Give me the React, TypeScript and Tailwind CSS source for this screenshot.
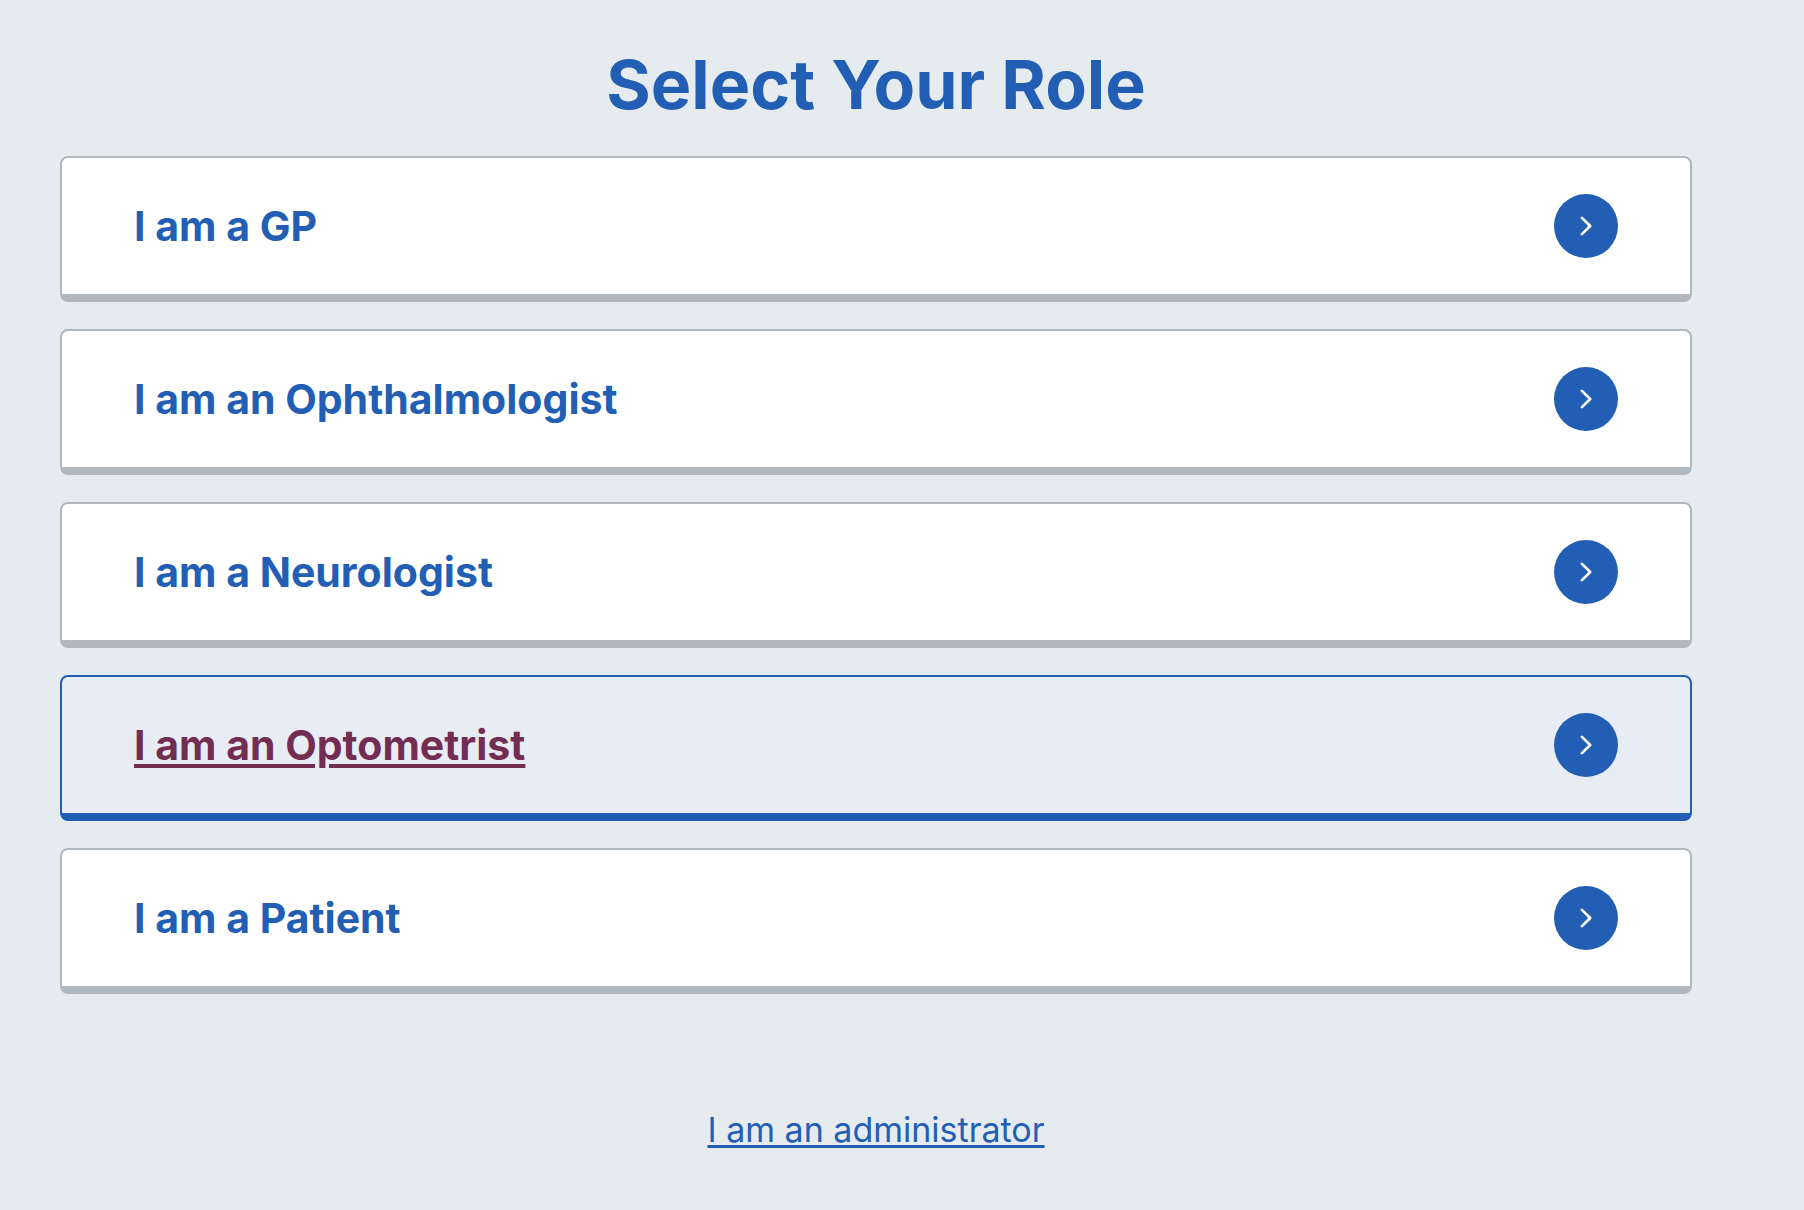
const roles = [
  { label: 'I am a GP', active: false },
  { label: 'I am an Ophthalmologist', active: false },
  { label: 'I am a Neurologist', active: false },
  { label: 'I am an Optometrist', active: true },
  { label: 'I am a Patient', active: false },
];

function Chevron() {
  return (
    <span className="flex size-16 shrink-0 items-center justify-center rounded-full bg-[#225fb4]">
      <svg viewBox="0 0 24 24" className="size-6" fill="none" stroke="#fff" strokeWidth="2.7" strokeLinecap="round" strokeLinejoin="round" aria-hidden="true">
        <path d="M7.9 3.9 16.2 12l-8.3 8.1" />
      </svg>
    </span>
  );
}

function RoleCard({ label, active }: { label: string; active: boolean }) {
  return (
    <a
      href="#"
      className={
        'flex items-center justify-between rounded-lg border-2 border-b-8 px-18 py-9 ' +
        (active
          ? 'border-[#225fb4] bg-[#e8ecf5] text-[#732d53] underline decoration-4 underline-offset-4'
          : 'border-[#b0b7bd] bg-white text-[#225fb4]')
      }
    >
      <span className="text-[41px] leading-16 font-bold">{label}</span>
      <Chevron />
    </a>
  );
}

export default function App() {
  return (
    <div className="relative min-h-screen overflow-hidden bg-[#e6ebef] pt-12 pr-28 pb-12 pl-15 font-[Inter,sans-serif] text-[#225fb4]">
      <h1 className="text-center text-[68px] leading-[72px] font-bold">Select Your Role</h1>
      <nav aria-label="Roles" className="mt-9 flex flex-col gap-[27px]">
        {roles.map((role) => (
          <RoleCard key={role.label} {...role} />
        ))}
      </nav>
      <p className="mt-28 text-center text-[34px] leading-12">
        <a href="#" className="underline decoration-3 underline-offset-3">I am an administrator</a>
      </p>
      <div className="absolute top-[868px] -right-[109px] size-29 rounded-full bg-[#e5eaee]" aria-hidden="true" />
    </div>
  );
}
